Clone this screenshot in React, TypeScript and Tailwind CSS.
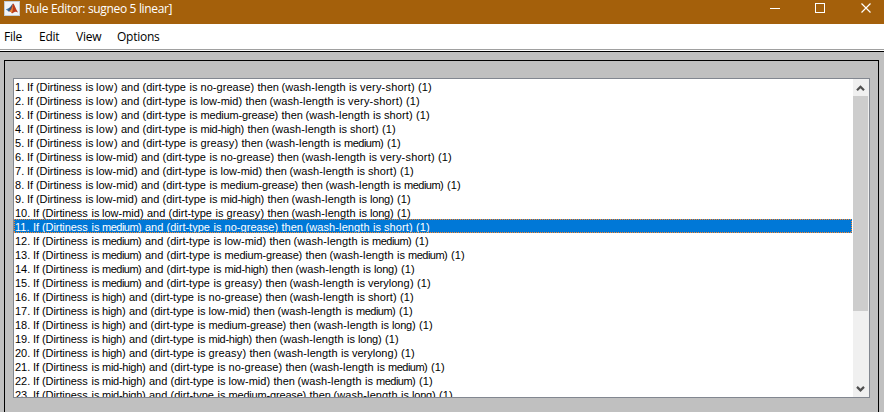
const rules: [string, string, string][] = [
  ["low", "no-grease", "very-short"],
  ["low", "low-mid", "very-short"],
  ["low", "medium-grease", "short"],
  ["low", "mid-high", "short"],
  ["low", "greasy", "medium"],
  ["low-mid", "no-grease", "very-short"],
  ["low-mid", "low-mid", "short"],
  ["low-mid", "medium-grease", "medium"],
  ["low-mid", "mid-high", "long"],
  ["low-mid", "greasy", "long"],
  ["medium", "no-grease", "short"],
  ["medium", "low-mid", "medium"],
  ["medium", "medium-grease", "medium"],
  ["medium", "mid-high", "long"],
  ["medium", "greasy", "verylong"],
  ["high", "no-grease", "short"],
  ["high", "low-mid", "medium"],
  ["high", "medium-grease", "long"],
  ["high", "mid-high", "long"],
  ["high", "greasy", "verylong"],
  ["mid-high", "no-grease", "medium"],
  ["mid-high", "low-mid", "medium"],
  ["mid-high", "medium-grease", "long"],
];

const SELECTED = 10;

// Width and tracking of each fuzzy-set name, in whole pixels per word.
const termClass: Record<string, string> = {
  low: "w-[18px] tracking-[0.4px]",
  "low-mid": "w-[38px]",
  medium: "w-[36px] tracking-[-0.5px]",
  high: "w-[20px] tracking-[-0.2px]",
  "mid-high": "w-[40px] tracking-[-0.27px]",
  "no-grease": "w-[50px] tracking-[0.05px]",
  "medium-grease": "w-[74px] tracking-[-0.18px]",
  greasy: "w-[34px] tracking-[0.15px]",
  short: "w-[25px] tracking-[0.1px]",
  "very-short": "w-[51px] tracking-[0.2px]",
  long: "w-[20px] tracking-[-0.2px]",
  verylong: "w-[42px]",
};

function Term({ name }: { name: string }) {
  return <span className={`shrink-0 ${termClass[name]}`}>{name}</span>;
}

function RuleText({ n, rule }: { n: number; rule: [string, string, string] }) {
  return (
    <div className="flex h-[14px] whitespace-pre leading-4">
      <span className={n < 10 ? "w-[12px]" : "w-[18px]"}>{n}. </span>
      <span className="w-[9px]">If </span>
      <span className="w-[49.5px] tracking-[-0.08px]">(Dirtiness </span>
      <span className="w-[10.5px]">is </span>
      <Term name={rule[0]} />
      <span className="w-[7px]">) </span>
      <span className="w-[21.5px]">and </span>
      <span className="w-[47px]">(dirt-type </span>
      <span className="w-[11px]">is </span>
      <Term name={rule[1]} />
      <span className="w-[7px]">) </span>
      <span className="w-[24px]">then </span>
      <span className="w-[67.5px] tracking-[0.1px]">(wash-length </span>
      <span className="w-[11px]">is </span>
      <Term name={rule[2]} />
      <span className="w-[7px]">) </span>
      <span className="tracking-[0.1px]">(1)</span>
    </div>
  );
}

function MatlabIcon() {
  return (
    <svg className="ml-1 mt-px h-[15px] w-4 shrink-0" viewBox="0 0 16 15">
      <rect width="16" height="15" fill="#c3ccd6" />
      <rect x="1" y="1" width="14" height="13" fill="#f1f4f7" />
      <path d="M1.8 8.6 5 7 7 8 5 10.6Z" fill="#3f7fb5" />
      <path d="M5 7C7 6.3 7.4 3.4 9 2.6L7.5 8.3 5 10.6 3.8 9.9Z" fill="#35577e" />
      <path d="M9 2.6C10.5 3 11.5 7.6 14 11.4 12.2 10.4 11 10 8 12.6 7.4 11.2 6.4 10.4 5 10.6 7.5 9.1 8 4.8 9 2.6Z" fill="#b93a1c" />
      <path d="M9 3.5C9 6.8 8.7 9.6 8 12 7.4 11 6.6 10.6 5.7 10.4 7.8 9 8.4 6 9 3.5Z" fill="#e98a3a" />
    </svg>
  );
}

function TitleBar() {
  return (
    <div className="flex h-6 items-start bg-[#a4600b] text-white">
      <MatlabIcon />
      <span className="ml-[5px] mt-px whitespace-nowrap font-['Open_Sans','Noto_Sans',sans-serif] text-[12px] leading-4 tracking-[-0.34px]">
        Rule Editor: sugneo 5 linear]
      </span>
      <svg className="ml-auto h-4 w-[114px] shrink-0" viewBox="770 0 114 16" fill="none" stroke="#fff" shapeRendering="crispEdges">
        <path d="M770 8.5h10M815.5 3.5h9v9h-9z" />
        <path d="M861.5 3.5l9 9M870.5 3.5l-9 9" shapeRendering="auto" strokeWidth="1.2" />
      </svg>
    </div>
  );
}

function MenuBar() {
  return (
    <div className="flex h-[25px] items-center bg-white pl-1 font-['Open_Sans','Noto_Sans',sans-serif] text-[12px] leading-4 tracking-[-0.25px] text-black">
      <span className="w-[35px]">File</span>
      <span className="w-[37px]">Edit</span>
      <span className="w-[41px]">View</span>
      <span>Options</span>
    </div>
  );
}

function ScrollBar() {
  return (
    <div className="flex w-4 shrink-0 flex-col bg-[#f0f0f0]">
      <svg className="h-[17px] w-[15px]" viewBox="0 0 15 17" fill="none" stroke="#505050" strokeWidth="2.2">
        <path d="M4 11.2 7.5 7.7 11 11.2" />
      </svg>
      <div className="h-[215px] w-[15px] bg-[#cdcdcd]" />
      <svg className="mt-auto h-[17px] w-[15px]" viewBox="0 0 15 17" fill="none" stroke="#505050" strokeWidth="2.2">
        <path d="M4 6.9 7.5 10.4 11 6.9" />
      </svg>
    </div>
  );
}

// One-pixel focus dots along the top and bottom of the selected row.
const dots = "h-px bg-[repeating-linear-gradient(90deg,#ff8728_0_1px,#0078d7_1px_2px)]";

export default function App() {
  return (
    <div className="flex h-[412px] w-[884px] flex-col overflow-hidden bg-[#c0c0c0]">
      <TitleBar />
      <MenuBar />
      <div className="h-[3px] shrink-0 border-b border-t border-b-black border-t-[#a0a0a0] bg-white" />
      <div className="ml-1 mr-[5px] mt-2 flex-1 border border-b-0 border-black pl-2 pt-[17px]">
        <div className="flex h-[320px] w-[857px] overflow-hidden border border-[#828790] bg-white">
          <div className="w-[839px] shrink-0 font-['Liberation_Sans',Arial,sans-serif] text-[11px] text-black">
            {rules.map((rule, i) =>
              i === SELECTED ? (
                <div key={i} className="flex h-[14px] w-[838px] flex-col bg-[#0078d7] text-white">
                  <div className={dots} />
                  <div className="flex h-3">
                    <div className="h-3 w-px bg-[repeating-linear-gradient(180deg,#0078d7_0_1px,#ff8728_1px_2px)]" />
                    <div className="-mt-px flex-1">
                      <RuleText n={i + 1} rule={rule} />
                    </div>
                    <div className="h-3 w-px bg-[repeating-linear-gradient(180deg,#0078d7_0_1px,#ff8728_1px_2px)]" />
                  </div>
                  <div className={dots} />
                </div>
              ) : (
                <div key={i} className="h-[14px] pl-px">
                  <RuleText n={i + 1} rule={rule} />
                </div>
              ),
            )}
          </div>
          <ScrollBar />
        </div>
      </div>
    </div>
  );
}
